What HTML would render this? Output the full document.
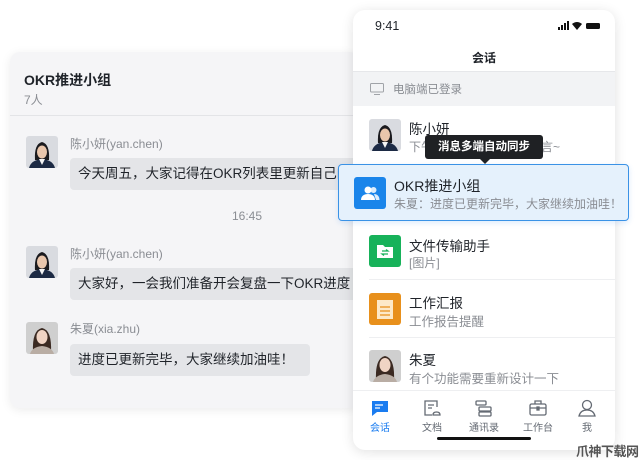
<!DOCTYPE html>
<html><head><meta charset="utf-8"><style>
*{margin:0;padding:0;box-sizing:border-box}
body{width:640px;height:460px;background:#fff;position:relative;overflow:hidden;font-family:"Liberation Sans","Noto Sans CJK SC",sans-serif;color:#1f2329}
.abs{position:absolute;white-space:nowrap}
.card{position:absolute;left:10px;top:52px;width:350px;height:356px;background:#f5f5f7;border-radius:10px;box-shadow:0 2px 10px rgba(0,0,0,.08);overflow:hidden}
.bub{position:absolute;background:#e4e5e8;border-radius:4px;height:32px;line-height:32px;font-size:13.5px;padding-left:8px;color:#1f2329;white-space:nowrap;overflow:hidden}
.nm{position:absolute;font-size:12px;color:#8a8d93;white-space:nowrap}
.phone{position:absolute;left:353px;top:10px;width:262px;height:440px;background:#fff;border-radius:12px;box-shadow:0 2px 12px rgba(0,0,0,.12);overflow:hidden}
.t{font-size:13.5px;color:#1f2329}
.s{font-size:12px;color:#8a8d93}
.dv{position:absolute;left:16px;right:0;height:1px;background:#eeeff1}
.tab{position:absolute;top:409px;font-size:10px;color:#646a73;text-align:center;width:40px}
</style></head><body>
<svg width="0" height="0" style="position:absolute"><defs>
<g id="av1"><rect width="32" height="32" rx="3" fill="#d9dbe0"/><path d="M9 24 Q8 8 16 6 Q24 8 23 24Z" fill="#1a1a1e"/><ellipse cx="16" cy="16" rx="5" ry="6.5" fill="#e9c6ac"/><path d="M3 32 Q5 24 16 23 Q27 24 29 32Z" fill="#1c2a44"/><path d="M13 23 L16 29 L19 23Z" fill="#f4f4f4"/></g>
<g id="av2"><rect width="32" height="32" rx="3" fill="#cfcfcf"/><path d="M7 30 Q6 8 16 6 Q26 8 25 30Z" fill="#3b2a22"/><ellipse cx="16" cy="15" rx="5.5" ry="7" fill="#f0d4c4"/><path d="M4 32 Q6 25 16 24 Q26 25 28 32Z" fill="#b9ada4"/></g>
</defs></svg>

<div class="card">
 <div class="abs" style="left:14px;top:18px;font-size:14px;font-weight:bold">OKR推进小组</div>
 <div class="abs" style="left:14px;top:39px;font-size:12px;color:#8a8d93">7人</div>
 <div style="position:absolute;left:0;right:0;top:63px;height:1px;background:#e3e4e7"></div>
 <svg class="abs" style="left:16px;top:84px" width="32" height="32"><use href="#av1"/></svg>
 <div class="nm" style="left:60px;top:83px">陈小妍(yan.chen)</div>
 <div class="bub" style="left:60px;top:106px;width:300px">今天周五，大家记得在OKR列表里更新自己的进度</div>
 <div class="abs" style="left:222px;top:157px;font-size:12px;color:#8a8d93">16:45</div>
 <svg class="abs" style="left:16px;top:194px" width="32" height="32"><use href="#av1"/></svg>
 <div class="nm" style="left:60px;top:193px">陈小妍(yan.chen)</div>
 <div class="bub" style="left:60px;top:216px;width:300px">大家好，一会我们准备开会复盘一下OKR进度</div>
 <svg class="abs" style="left:16px;top:270px" width="32" height="32"><use href="#av2"/></svg>
 <div class="nm" style="left:60px;top:268px">朱夏(xia.zhu)</div>
 <div class="bub" style="left:60px;top:292px;width:240px">进度已更新完毕，大家继续加油哇！</div>
</div>

<div class="phone">
 <div class="abs" style="left:22px;top:9px;font-size:12.5px">9:41</div>
 <svg class="abs" style="left:205px;top:11px" width="50" height="10"><rect x="0" y="6" width="2" height="3" fill="#111"/><rect x="3" y="4" width="2" height="5" fill="#111"/><rect x="6" y="2" width="2" height="7" fill="#111"/><rect x="9" y="0" width="2" height="9" fill="#111"/><path d="M14 3 Q19 -1 24 3 L19 9Z" fill="#111"/><rect x="28" y="2" width="14" height="6" rx="1.5" fill="#111"/></svg>
 <div class="abs" style="left:0;width:262px;text-align:center;top:39px;font-size:12px;font-weight:bold">会话</div>
 <div style="position:absolute;left:0;right:0;top:61px;height:35px;background:#f2f3f5;border-top:1px solid #e6e7ea"></div>
 <svg class="abs" style="left:17px;top:73px" width="14" height="12"><rect x="0.5" y="0.5" width="13" height="8.5" rx="1" fill="none" stroke="#a0a3a8"/><path d="M4 11.5H10" stroke="#a0a3a8"/></svg>
 <div class="abs s" style="left:40px;top:71px;font-size:11.5px">电脑端已登录</div>
 <svg class="abs" style="left:16px;top:109px" width="32" height="32"><use href="#av1"/></svg>
 <div class="abs t" style="left:56px;top:108px">陈小妍</div>
 <div class="abs s" style="left:56px;top:128px">下午开会，有需要的请留言~</div>
 <div class="abs t" style="left:56px;top:225px">文件传输助手</div>
 <svg class="abs" style="left:16px;top:225px" width="32" height="32"><rect width="32" height="32" rx="3" fill="#17b25a"/><path d="M8 10h6l2 2h8v11H8z" fill="#fff"/><path d="M13 16h6l-2-1.5M19 19h-6l2 1.5" stroke="#17b25a" stroke-width="1.2" fill="none"/></svg>
 <div class="abs s" style="left:56px;top:244px">[图片]</div>
 <div class="dv" style="top:269px"></div>
 <svg class="abs" style="left:16px;top:283px" width="32" height="32"><rect width="32" height="32" rx="3" fill="#e8901c"/><rect x="8" y="7" width="16" height="19" fill="#fde9c8"/><path d="M11 14h10M11 18h10M11 22h10" stroke="#e8901c" stroke-width="1.2"/></svg>
 <div class="abs t" style="left:56px;top:282px">工作汇报</div>
 <div class="abs s" style="left:56px;top:301px;font-size:12.5px">工作报告提醒</div>
 <div class="dv" style="top:327px"></div>
 <svg class="abs" style="left:16px;top:340px" width="32" height="32"><use href="#av2"/></svg>
 <div class="abs t" style="left:56px;top:339px">朱夏</div>
 <div class="abs s" style="left:56px;top:358px;font-size:12.5px">有个功能需要重新设计一下</div>
 <div style="position:absolute;left:0;right:0;top:380px;height:1px;background:#eeeff1"></div>
 <svg class="abs" style="left:18px;top:390px" width="18" height="16"><path d="M1 1h16v11H6l-5 4z" fill="#1a7cf0"/><path d="M4 5h8M4 8h5" stroke="#fff" stroke-width="1.3"/></svg>
 <div class="tab" style="left:7px;color:#1a7cf0">会话</div>
 <svg class="abs" style="left:70px;top:389px" width="18" height="18" fill="none" stroke="#646a73" stroke-width="1.3"><path d="M14 8V2H2v14h7"/><path d="M5 6h6M5 9h4"/><path d="M10 16c0-2 1.5-3 3.5-3s3.5 1 3.5 3z"/></svg>
 <div class="tab" style="left:59px">文档</div>
 <svg class="abs" style="left:121px;top:389px" width="20" height="18" fill="none" stroke="#646a73" stroke-width="1.3"><rect x="2" y="2" width="10" height="4" rx="1"/><rect x="5" y="8" width="12" height="4" rx="1"/><rect x="5" y="13" width="12" height="4" rx="1"/></svg>
 <div class="tab" style="left:111px">通讯录</div>
 <svg class="abs" style="left:176px;top:389px" width="18" height="18" fill="none" stroke="#646a73" stroke-width="1.3"><rect x="1" y="5" width="16" height="11" rx="1.5"/><path d="M6 5V2h6v3M1 9h16"/><rect x="8" y="8" width="2" height="3" fill="#646a73"/></svg>
 <div class="tab" style="left:165px">工作台</div>
 <svg class="abs" style="left:225px;top:389px" width="18" height="18" fill="none" stroke="#646a73" stroke-width="1.3"><circle cx="9" cy="6" r="4.5"/><path d="M1 17c1-4 4-6 8-6s7 2 8 6z"/></svg>
 <div class="tab" style="left:214px">我</div>
 <div style="position:absolute;left:84px;top:427px;width:94px;height:3px;border-radius:2px;background:#111"></div>
</div>

<div style="position:absolute;left:338px;top:164px;width:291px;height:57px;background:#e5f1fc;border:1px solid #3a92e6;border-radius:4px;box-shadow:0 2px 6px rgba(26,124,240,.15)"></div>
<svg class="abs" style="left:354px;top:177px" width="32" height="32"><rect width="32" height="32" rx="3" fill="#1a85ea"/><circle cx="14" cy="13" r="3.5" fill="#fff"/><path d="M7 23c0-4 3-6 7-6s7 2 7 6z" fill="#fff"/><circle cx="19.5" cy="13" r="3" fill="#fff" opacity=".85"/><path d="M20 17c3 0 5.5 2 5.5 6H22" fill="#fff" opacity=".85"/></svg>
<div class="abs t" style="left:394px;top:176px;font-size:14px">OKR推进小组</div>
<div class="abs s" style="left:394px;top:195px">朱夏：进度已更新完毕，大家继续加油哇！</div>

<div style="position:absolute;left:425px;top:135px;width:118px;height:24px;background:#1f2124;border-radius:3px;color:#fff;font-size:11.5px;font-weight:bold;text-align:center;line-height:24px">消息多端自动同步</div>
<div style="position:absolute;left:480px;top:159px;width:0;height:0;border-left:5px solid transparent;border-right:5px solid transparent;border-top:5px solid #1f2124"></div>

<div class="abs" style="left:576px;top:441px;font-size:13px;font-weight:bold;color:#555;letter-spacing:-0.5px">爪神下载网</div>
</body></html>
